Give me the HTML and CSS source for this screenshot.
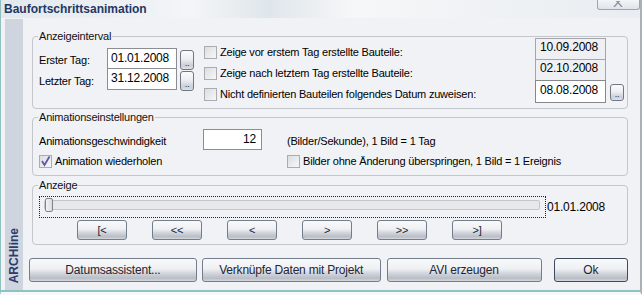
FILE: index.html
```html
<!DOCTYPE html>
<html lang="de">
<head>
  <meta charset="UTF-8" />
  <title>Baufortschrittsanimation</title>
  <link rel="stylesheet" href="styles.css">
</head>
<body>
  <div class="window">
    <!-- Title bar -->
    <div class="titlebar">
      <span class="title">Baufortschrittsanimation</span>
      <div class="close">
        <svg width="14" height="6" viewBox="0 0 14 6"><path d="M2 -3 L10 6 M10 -3 L2 6" stroke="#8e959e" stroke-width="1.4" fill="none"/></svg>
      </div>
    </div>

    <div class="body">
      <div class="brand"><span>ARCHline</span></div>

      <div class="content">
        <!-- Anzeigeinterval -->
        <div class="group group-interval">
          <span class="legend">Anzeigeinterval</span>
          <div class="dates">
            <label class="lbl">Erster Tag:</label>
            <div class="field">01.01.2008</div>
            <div class="mini">..</div>
            <label class="lbl">Letzter Tag:</label>
            <div class="field field-2">31.12.2008</div>
            <div class="mini">..</div>
          </div>
          <div class="options">
            <div class="check check-row"><span class="box"></span>Zeige vor erstem Tag erstellte Bauteile:</div>
            <div class="datebox">10.09.2008</div>
            <div></div>
            <div class="check check-row"><span class="box"></span>Zeige nach letztem Tag erstellte Bauteile:</div>
            <div class="datebox">02.10.2008</div>
            <div></div>
            <div class="check check-row"><span class="box"></span>Nicht definierten Bauteilen folgendes Datum zuweisen:</div>
            <div class="datebox datebox-edit">08.08.2008</div>
            <div class="mini mini-small">..</div>
          </div>
        </div>

        <!-- Animationseinstellungen -->
        <div class="group group-anim">
          <span class="legend">Animationseinstellungen</span>
          <div class="anim-grid">
            <span class="lbl">Animationsgeschwindigkeit</span>
            <div class="field field-num">12</div>
            <span class="lbl">(Bilder/Sekunde), 1 Bild = 1 Tag</span>
            <div class="check check-wide">
              <span class="box checked">
                <svg width="11" height="11" viewBox="0 0 11 11"><polyline points="2,5 4.5,9 9.5,0.5" fill="none" stroke="#5a5ca8" stroke-width="1.8"/></svg>
              </span>Animation wiederholen
            </div>
            <div class="check"><span class="box"></span>Bilder ohne Änderung überspringen, 1 Bild = 1 Ereignis</div>
          </div>
        </div>

        <!-- Anzeige -->
        <div class="group group-view">
          <span class="legend">Anzeige</span>
          <div class="slider-row">
            <div class="slider">
              <div class="track"></div>
              <div class="thumb"></div>
            </div>
            <span class="slider-date">01.01.2008</span>
          </div>
          <div class="nav">
            <div class="btn nav-btn">[&lt;</div>
            <div class="btn nav-btn">&lt;&lt;</div>
            <div class="btn nav-btn">&lt;</div>
            <div class="btn nav-btn">&gt;</div>
            <div class="btn nav-btn">&gt;&gt;</div>
            <div class="btn nav-btn">&gt;]</div>
          </div>
        </div>

        <!-- Buttons -->
        <div class="actions">
          <div class="btn btn-assist">Datumsassistent...</div>
          <div class="btn btn-link">Verknüpfe Daten mit Projekt</div>
          <div class="btn btn-avi">AVI erzeugen</div>
          <div class="btn btn-ok">Ok</div>
        </div>
      </div>
    </div>
  </div>
</body>
</html>
```

FILE: styles.css
```css
* {
  margin: 0;
  padding: 0;
  box-sizing: border-box;
}

body {
  font-family: 'Liberation Sans', Arial, sans-serif;
  font-size: 11px;
  letter-spacing: -0.2px;
  color: #000;
  background: #f1f2f6;
  overflow: hidden;
}

.window {
  width: 642px;
  height: 295px;
  background: #f1f2f6;
  border-left: 1px solid #8fbfbe;
  border-right: 2px solid #a9b1ba;
  border-bottom: 3px solid #f6f8f9;
  box-shadow: inset 0 -2px 0 #8fc2c0;
  display: flex;
  flex-direction: column;
}

/* Title bar */
.titlebar {
  height: 18px;
  display: flex;
  align-items: flex-start;
  background: linear-gradient(to right, #e2e9ee 0%, #f3f5f7 30%, #dfe6eb 42%, #f6f7f8 55%, #eef1f4 80%, #e9edf1 100%);
}

.title {
  font-size: 12px;
  font-weight: bold;
  letter-spacing: 0;
  color: #1f3763;
  line-height: 18px;
  padding-left: 3px;
}

.close {
  margin-left: auto;
  width: 43px;
  height: 10px;
  border: 1px solid #9aa6b3;
  border-top: none;
  border-radius: 0 0 3px 3px;
  background: linear-gradient(to bottom, #f3f5f7, #dfe4ea);
  display: flex;
  justify-content: center;
  padding-top: 1px;
}

/* Body */
.body {
  flex: 1;
  display: flex;
  padding: 1px 0 0 4px;
}

.brand {
  width: 18px;
  height: 271px;
  background: #cfd5df;
  display: flex;
  align-items: flex-end;
  justify-content: center;
  padding-bottom: 7px;
}

.brand span {
  writing-mode: vertical-rl;
  transform: rotate(180deg);
  font-size: 12px;
  font-weight: bold;
  letter-spacing: 0;
  color: #2b3b6a;
  line-height: 14px;
}

.content {
  width: 605px;
  display: flex;
  flex-direction: column;
}

/* Group boxes */
.group {
  position: relative;
  margin-left: 9px;
  width: 596px;
  border: 1px solid #c3c6cd;
  border-radius: 4px;
}

.legend {
  position: absolute;
  top: -7px;
  left: 5px;
  padding: 0 1px;
  line-height: 13px;
  background: #f1f2f6;
  color: #111;
}

.group-interval {
  margin-top: 17px;
  height: 73px;
  display: flex;
  align-items: flex-start;
}

.group-anim {
  margin-top: 8px;
  height: 59px;
}

.group-view {
  margin-top: 9px;
  height: 60px;
}

/* Interval */
.dates {
  margin: 11px 0 0 6px;
  display: grid;
  grid-template-columns: 68px 73px 14px;
  grid-template-rows: 21px 22px;
}

.lbl {
  display: flex;
  align-items: center;
  padding-top: 2px;
  white-space: nowrap;
}

.field {
  width: 70px;
  height: 22px;
  border: 1px solid #8a8d93;
  background: #fff;
  padding: 0 3px;
  line-height: 19px;
  font-size: 12px;
}

.field-2 {
  margin-top: -1px;
}

.mini {
  width: 14px;
  height: 20px;
  margin-top: 2px;
  border: 1px solid #6f7782;
  border-radius: 3px;
  background: linear-gradient(to bottom, #fbfbfc 0%, #eceef1 45%, #cbcfd6 80%, #dfe2e6 100%);
  font-size: 9px;
  line-height: 24px;
  text-align: center;
  color: #333;
  overflow: hidden;
}

.options {
  margin: 1px 0 0 10px;
  display: grid;
  grid-template-columns: 331px 75px 14px;
  grid-template-rows: 21px 21px 22px;
}

.check {
  display: flex;
  align-items: center;
  gap: 3px;
  white-space: nowrap;
  line-height: 13px;
}

.check-row {
  align-self: start;
  margin-top: 8px;
}

.box {
  width: 13px;
  height: 13px;
  flex: none;
  border: 1px solid #a8acb3;
  background: linear-gradient(135deg, #dcdde1, #f7f7f8);
  display: flex;
  align-items: center;
  justify-content: center;
}

.datebox {
  width: 71px;
  height: 22px;
  border: 1px solid #a3a5a9;
  background: #eff0f3;
  padding: 0 4px;
  font-size: 12px;
  line-height: 17px;
}

.datebox-edit {
  background: #fff;
  border-color: #85888d;
  height: 23px;
  line-height: 19px;
}

.mini-small {
  height: 17px;
  margin-top: 4px;
  line-height: 19px;
}

/* Animation settings */
.anim-grid {
  padding: 11px 0 0 6px;
  display: grid;
  grid-template-columns: 164px 84px 1fr;
  grid-template-rows: 21px 14px;
  row-gap: 4px;
}

.field-num {
  width: 59px;
  height: 21px;
  text-align: right;
  padding-right: 5px;
  line-height: 18px;
}

.check-wide {
  grid-column: 1 / 3;
}

/* View */
.slider-row {
  margin: 10px 0 0 6px;
  display: flex;
  align-items: center;
}

.slider {
  position: relative;
  width: 507px;
  height: 22px;
  border: 1px dotted #222;
  padding: 3px 5px 0 4px;
}

.track {
  height: 10px;
  border: 1px solid #c2c6cc;
  border-radius: 2px;
  background: #e6e8eb;
}

.thumb {
  position: absolute;
  left: 5px;
  top: 1px;
  width: 8px;
  height: 14px;
  border: 1px solid #7e858f;
  border-radius: 2px;
  background: linear-gradient(to right, #f4f4f5, #d8dadd);
}

.slider-date {
  padding-left: 1px;
  font-size: 12px;
}

.nav {
  margin: 2px 0 0 44px;
  display: flex;
  gap: 25px;
}

/* Buttons */
.btn {
  display: flex;
  align-items: center;
  justify-content: center;
  border: 1px solid #747d8b;
  border-radius: 3px;
  background: linear-gradient(to bottom, #f8f9fa 0%, #eef0f3 45%, #d2d6dc 65%, #b8bdc6 88%, #d6d9de 100%);
  font-size: 12px;
  color: #1e2535;
  white-space: nowrap;
}

.nav-btn {
  width: 50px;
  height: 20px;
  font-size: 11px;
}

.actions {
  margin: 13px 0 0 6px;
  display: flex;
}

.actions .btn {
  height: 24px;
}

.btn-assist {
  width: 169px;
}

.btn-link {
  width: 180px;
  margin-left: 5px;
}

.btn-avi {
  width: 156px;
  margin-left: 6px;
}

.btn-ok {
  width: 75px;
  margin-left: 12px;
  border-color: #3e4b5e;
}
```
